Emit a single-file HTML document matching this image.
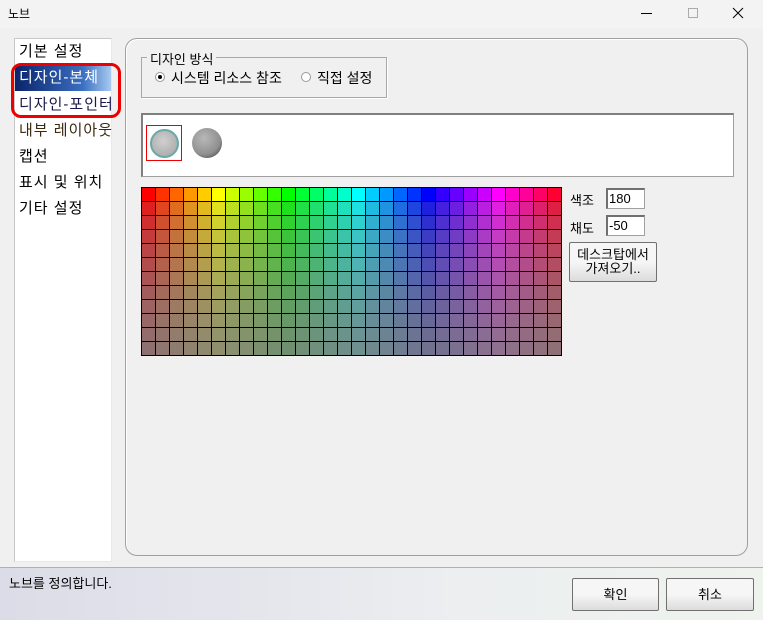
<!DOCTYPE html>
<html><head><meta charset="utf-8"><style>
*{margin:0;padding:0;box-sizing:border-box}
body{width:763px;height:620px;background:#f0f0f0;font-family:"Liberation Sans","Noto Sans CJK KR","NanumGothic",sans-serif;position:relative;overflow:hidden;font-size:13px;color:#000}
.a{position:absolute}
#title{left:0;top:0;width:763px;height:28px;background:#f3f3f3}
#list{left:14px;top:38px;width:98px;height:524px;background:#fff;border:1px solid #c8c8c8;border-right-color:#e8e8e8;border-bottom-color:#e8e8e8}
.it{position:absolute;left:4px;font-size:15px;line-height:26px;height:26px;width:92px;white-space:nowrap;letter-spacing:1px}
#panel{left:125px;top:38px;width:623px;height:518px;border:1px solid #a0a0a0;border-radius:12px;box-shadow:inset 1px 1px 0 #fff}
#grp{left:141px;top:57px;width:246px;height:41px;border:1px solid #a8a8a8;box-shadow:1px 1px 0 #fff}
#prev{left:141px;top:113px;width:593px;height:64px;background:#fff;border:1px solid #a0a0a0;border-top:2px solid #808080;border-left:2px solid #808080}
#grid{left:141px;top:187px;width:421px;height:169px;background:#000;display:grid;grid-template-columns:repeat(30,13px);grid-auto-rows:13px;gap:1px;padding:1px}
.inp{position:absolute;width:39px;height:21px;background:#fff;border:1px solid #a0a0a0;border-top:2px solid #707070;border-left:2px solid #707070;font-size:13px;line-height:17px;padding-left:1px}
.btn{position:absolute;border:1px solid #707070;border-radius:2px;background:linear-gradient(#f6f6f6 50%,#dcdcdc);text-align:center;font-size:13px}
#status{left:0;top:567px;width:763px;height:53px;background:linear-gradient(90deg,#dcdce8,#eceef0 60%,#eef3ee);border-top:1px solid #b0b0b0}
</style></head><body>
<div id="title" class="a"><span class="a" style="left:8px;top:5px;font-size:12px">노브</span>
<div class="a" style="left:641px;top:13px;width:11px;height:1px;background:#000"></div>
<div class="a" style="left:688px;top:8px;width:10px;height:10px;border:1px solid #aaa"></div>
<svg class="a" style="left:732px;top:7px" width="12" height="12"><path d="M1 1L11 11M11 1L1 11" stroke="#000" stroke-width="1"/></svg>
</div>
<div id="list" class="a">
<div class="it" style="top:0">기본 설정</div>
<div class="it" style="top:26px;left:0;width:96px;padding-left:4px;color:#fff;background:linear-gradient(90deg,#0a246a,#3a6ec0 70%,#a6caf0)">디자인-본체</div>
<div class="it" style="top:53px;color:#1a1a4a">디자인-포인터</div>
<div class="it" style="top:79px;color:#3a2a10">내부 레이아웃</div>
<div class="it" style="top:105px">캡션</div>
<div class="it" style="top:131px">표시 및 위치</div>
<div class="it" style="top:157px">기타 설정</div>
</div>
<div class="a" style="left:11px;top:63px;width:110px;height:55px;border:3px solid #e00;border-radius:10px"></div>
<div id="panel" class="a"></div>
<div id="grp" class="a"></div>
<span class="a" style="left:147px;top:49px;background:#f0f0f0;padding:0 3px">디자인 방식</span>
<div class="a" style="left:155px;top:72px;width:10px;height:10px;border-radius:50%;border:1px solid #999;background:#fff"><div class="a" style="left:2px;top:2px;width:4px;height:4px;border-radius:50%;background:#000"></div></div>
<span class="a" style="left:171px;top:68px;font-size:14px">시스템 리소스 참조</span>
<div class="a" style="left:301px;top:72px;width:10px;height:10px;border-radius:50%;border:1px solid #999;background:#fff"></div>
<span class="a" style="left:317px;top:68px;font-size:14px">직접 설정</span>
<div id="prev" class="a"></div>
<div class="a" style="left:146px;top:125px;width:36px;height:36px;border:1px solid #e00"></div>
<div class="a" style="left:150px;top:129px;width:29px;height:29px;border-radius:50%;background:radial-gradient(circle at 45% 40%,#d0d0d0,#b0b0b0 70%);border:2px solid #6aa"></div>
<div class="a" style="left:192px;top:128px;width:30px;height:30px;border-radius:50%;background:radial-gradient(circle at 40% 35%,#b8b8b8,#909090 60%,#303030)"></div>
<div id="grid" class="a"></div>
<span class="a" style="left:570px;top:190px">색조</span>
<div class="inp" style="left:606px;top:188px">180</div>
<span class="a" style="left:570px;top:218px">채도</span>
<div class="inp" style="left:606px;top:215px">-50</div>
<div class="btn" style="left:569px;top:242px;width:88px;height:40px;line-height:14px;padding-top:5px">데스크탑에서<br>가져오기..</div>
<div id="status" class="a"><span class="a" style="left:9px;top:5px">노브를 정의합니다.</span></div>
<div class="btn" style="left:572px;top:578px;width:87px;height:33px;line-height:31px">확인</div>
<div class="btn" style="left:666px;top:578px;width:88px;height:33px;line-height:31px">취소</div>
<script>
var s=[100,76,63,54,46,40,34,28,23,19,15,12],g=document.getElementById('grid'),h='';
for(var r=0;r<12;r++)for(var c=0;c<30;c++)h+='<div style="background:hsl('+c*12+','+s[r]+'%,50%)"></div>';
g.innerHTML=h;
</script>
</body></html>
